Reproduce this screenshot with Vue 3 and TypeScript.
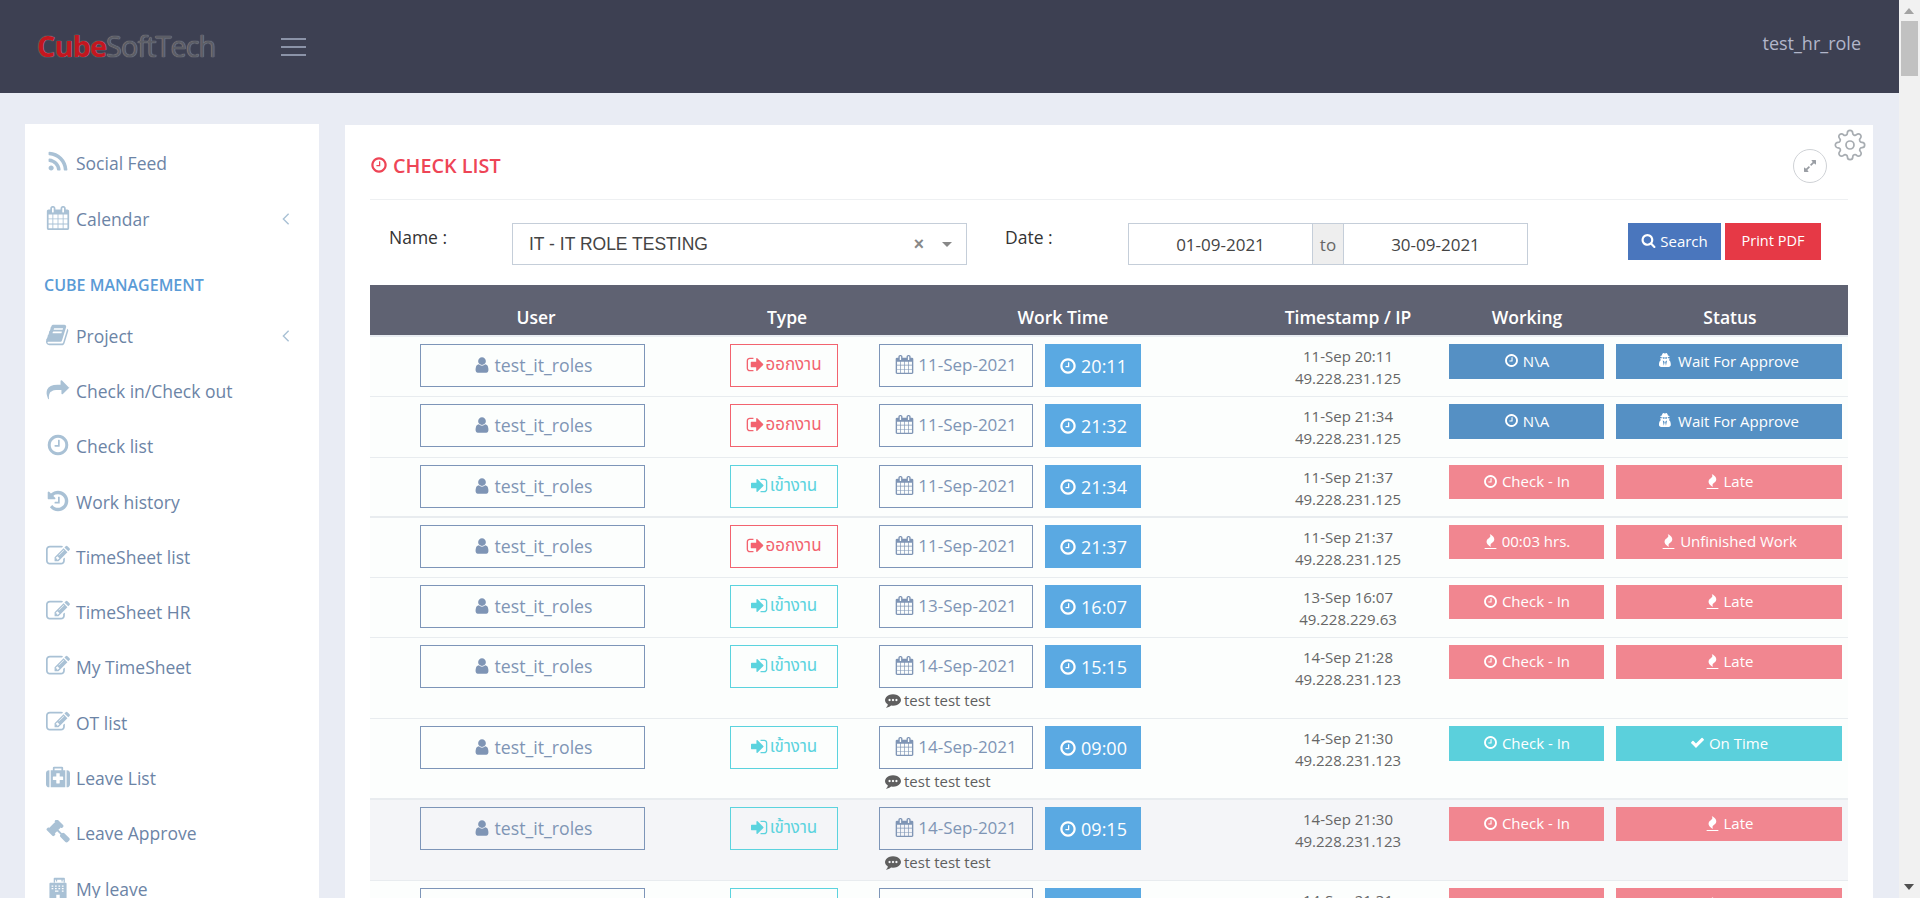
<template>
  <div class="page">
    <div class="viewport">
      <header class="topbar">
        <div class="logo"><span class="logo-cube">Cube</span><span class="logo-soft">SoftTech</span></div>
        <button class="burger" type="button" aria-label="menu"><i></i><i></i><i></i></button>
        <div class="username">test_hr_role</div>
      </header>

      <div class="body">
        <aside class="sidebar">
          <template v-for="item in menu" :key="item.label">
            <div v-if="item.section" class="menu-section">{{ item.label }}</div>
            <div v-else class="menu-item">
              <svg class="menu-icon" viewBox="0 0 1792 1792"><path :d="icons[item.icon!]" /></svg>
              <span class="menu-label">{{ item.label }}</span>
              <svg v-if="item.arrow" class="menu-arrow" viewBox="0 0 10 16"><path d="M8 2 2 8l6 6" /></svg>
            </div>
          </template>
        </aside>

        <main class="card">
          <svg class="gear" viewBox="0 0 24 24">
            <circle cx="12" cy="12" r="3" />
            <path d="M19.4 15a1.65 1.65 0 0 0 .33 1.82l.06.06a2 2 0 0 1 0 2.83 2 2 0 0 1-2.83 0l-.06-.06a1.65 1.65 0 0 0-1.82-.33 1.65 1.65 0 0 0-1 1.51V21a2 2 0 0 1-2 2 2 2 0 0 1-2-2v-.09A1.65 1.65 0 0 0 9 19.4a1.65 1.65 0 0 0-1.82.33l-.06.06a2 2 0 0 1-2.83 0 2 2 0 0 1 0-2.83l.06-.06a1.65 1.65 0 0 0 .33-1.82 1.65 1.65 0 0 0-1.51-1H3a2 2 0 0 1-2-2 2 2 0 0 1 2-2h.09A1.65 1.65 0 0 0 4.6 9a1.65 1.65 0 0 0-.33-1.82l-.06-.06a2 2 0 0 1 0-2.83 2 2 0 0 1 2.83 0l.06.06a1.65 1.65 0 0 0 1.82.33H9a1.65 1.65 0 0 0 1-1.51V3a2 2 0 0 1 2-2 2 2 0 0 1 2 2v.09a1.65 1.65 0 0 0 1 1.51 1.65 1.65 0 0 0 1.82-.33l.06-.06a2 2 0 0 1 2.83 0 2 2 0 0 1 0 2.83l-.06.06a1.65 1.65 0 0 0-.33 1.82V9a1.65 1.65 0 0 0 1.51 1H21a2 2 0 0 1 2 2 2 2 0 0 1-2 2h-.09a1.65 1.65 0 0 0-1.51 1z" />
          </svg>

          <div class="card-head">
            <h1 class="title">
              <svg class="ico" viewBox="0 0 1792 1792"><path :d="icons.clock" /></svg>
              CHECK LIST
            </h1>
            <button class="expand" type="button" aria-label="expand">
              <svg viewBox="0 0 1792 1792"><path :d="icons.expand" /></svg>
            </button>
          </div>

          <div class="filters">
            <label class="filter-label name-label">Name :</label>
            <div class="select">
              <span class="select-text">IT - IT ROLE TESTING</span>
              <span class="select-clear">×</span>
              <span class="select-caret"></span>
            </div>
            <label class="filter-label date-label">Date :</label>
            <div class="range">
              <span class="range-input">01-09-2021</span>
              <span class="range-to">to</span>
              <span class="range-input">30-09-2021</span>
            </div>
            <button class="btn btn-search" type="button">
              <svg class="ico" viewBox="0 0 1792 1792"><path :d="icons.search" /></svg>
              Search
            </button>
            <button class="btn btn-print" type="button">Print PDF</button>
          </div>

          <div class="thead grid">
            <div>User</div>
            <div>Type</div>
            <div>Work Time</div>
            <div>Timestamp / IP</div>
            <div>Working</div>
            <div>Status</div>
          </div>

          <div
            v-for="(row, i) in rows"
            :key="i"
            class="row grid"
            :class="{ hovered: row.hovered, thick: row.thick, tall: row.tall }"
          >
            <div class="cell-user">
              <div class="box box-user">
                <svg class="ico" viewBox="0 0 1792 1792"><path :d="icons.user" /></svg>
                test_it_roles
              </div>
            </div>
            <div class="cell-type">
              <div class="box box-type" :class="row.type === 'out' ? 'type-out' : 'type-in'">
                <svg class="ico" viewBox="0 0 1792 1792"><path :d="row.type === 'out' ? icons.signOut : icons.signIn" /></svg>
                <span>{{ row.type === 'out' ? 'ออกงาน' : 'เข้างาน' }}</span>
              </div>
            </div>
            <div class="cell-work">
              <div class="work-line">
                <div class="box box-date">
                  <svg class="ico" viewBox="0 0 1792 1792"><path :d="icons.calendar" /></svg>
                  {{ row.date }}
                </div>
                <div class="box-time">
                  <svg class="ico" viewBox="0 0 1792 1792"><path :d="icons.clock" /></svg>
                  {{ row.time }}
                </div>
              </div>
              <div v-if="row.note" class="note">
                <svg class="ico" viewBox="0 0 1792 1792"><path :d="icons.comment" /></svg>
                {{ row.note }}
              </div>
            </div>
            <div class="cell-stamp">
              <div>{{ row.stamp }}</div>
              <div>{{ row.ip }}</div>
            </div>
            <div class="cell-working">
              <div class="badge" :class="row.tone">
                <svg class="ico" viewBox="0 0 1792 1792"><path :d="icons[row.workIcon]" /></svg>
                {{ row.working }}
              </div>
            </div>
            <div class="cell-status">
              <div class="badge" :class="row.tone">
                <svg class="ico" viewBox="0 0 1792 1792"><path :d="icons[row.statusIcon]" /></svg>
                {{ row.status }}
              </div>
            </div>
          </div>
        </main>
      </div>
    </div>

    <div class="scrollbar">
      <span class="scroll-up"></span>
      <span class="scroll-thumb"></span>
      <span class="scroll-down"></span>
    </div>
  </div>
</template>

<script setup lang="ts">
const icons: Record<string, string> = {
  rss: 'M576 1344q0 80-56 136t-136 56-136-56-56-136 56-136 136-56 136 56 56 136zm512 123q2 28-17 48-18 21-47 21h-135q-25 0-43-16.5t-20-41.5q-22-229-184.5-391.5t-391.5-184.5q-25-2-41.5-20t-16.5-43v-135q0-29 21-47 17-17 43-17h5q160 13 306 80.5t259 181.5q114 113 181.5 259t80.5 306zm512 2q2 27-18 47-18 20-46 20h-143q-26 0-44.5-17.5t-19.5-42.5q-12-215-101-408.5t-231.5-336-336-231.5-408.5-102q-25-1-42.5-19.5t-17.5-43.5v-143q0-28 20-46 18-18 44-18h3q262 13 501.5 120t425.5 294q187 186 294 425.5t120 501.5z',
  calendar: 'M192 1664h288v-288h-288v288zm352 0h320v-288h-320v288zm-352-352h288v-320h-288v320zm352 0h320v-320h-320v320zm-352-384h288v-288h-288v288zm736 736h320v-288h-320v288zm-384-736h320v-288h-320v288zm768 736h288v-288h-288v288zm-384-352h320v-320h-320v320zm-352-864v-288q0-13-9.5-22.5t-22.5-9.5h-64q-13 0-22.5 9.5t-9.5 22.5v288q0 13 9.5 22.5t22.5 9.5h64q13 0 22.5-9.5t9.5-22.5zm736 864h288v-320h-288v320zm-384-384h320v-288h-320v288zm384 0h288v-288h-288v288zm32-480v-288q0-13-9.5-22.5t-22.5-9.5h-64q-13 0-22.5 9.5t-9.5 22.5v288q0 13 9.5 22.5t22.5 9.5h64q13 0 22.5-9.5t9.5-22.5zm384-64v1280q0 52-38 90t-90 38h-1408q-52 0-90-38t-38-90v-1280q0-52 38-90t90-38h128v-96q0-66 47-113t113-47h64q66 0 113 47t47 113v96h384v-96q0-66 47-113t113-47h64q66 0 113 47t47 113v96h128q52 0 90 38t38 90z',
  book: 'M1639 478q40 57 18 129l-275 906q-19 64-76.5 107.5t-122.5 43.5h-923q-77 0-148.5-53.5t-99.5-131.5q-24-67-2-127 0-4 3-27t4-37q1-8-3-21.5t-3-19.5q2-11 8-21t16.5-23.5 16.5-23.5q23-38 45-91.5t30-91.5q3-10 .5-30t-.5-28q3-11 17-28t17-23q21-36 42-92t25-90q1-9-2.5-32t.5-28q4-13 22-30.5t22-22.5q19-26 42.5-84.5t27.5-96.5q1-8-3-25.5t-2-26.5q2-8 9-18t18-23 17-21q8-12 16.5-30.5t15-35 16-36 19.5-32 26.5-23.5 36-11.5 47.5 5.5l-1 3q38-9 51-9h761q74 0 114 56t18 130l-274 906q-36 119-71.5 153.5t-128.5 34.5h-869q-27 0-38 15-11 16-1 43 24 70 144 70h923q29 0 56-15.5t35-41.5l300-987q7-22 5-57 38 15 59 43zm-1064 2q-4 13 2 22.5t20 9.5h608q13 0 25.5-9.5t16.5-22.5l21-64q4-13-2-22.5t-20-9.5h-608q-13 0-25.5 9.5t-16.5 22.5zm-83 256q-4 13 2 22.5t20 9.5h608q13 0 25.5-9.5t16.5-22.5l21-64q4-13-2-22.5t-20-9.5h-608q-13 0-25.5 9.5t-16.5 22.5z',
  share: 'M1792 640q0 26-19 45l-512 512q-19 19-45 19t-45-19-19-45v-256h-224q-98 0-175.5 6t-154 21.5-133 42.5-105.5 69.5-79 97-47 132.5-17 169q0 32 3 88 0 3 1 11.5t1 12.5q0 14-8 23t-22 9q-15 0-26-16-6-8-10-17t-10-21-8-16q-95-213-95-361 0-177 47-296 143-356 773-356h224v-256q0-26 19-45t45-19 45 19l512 512q19 19 19 45z',
  clock: 'M1024 544v448q0 14-9 23t-23 9h-320q-14 0-23-9t-9-23v-64q0-14 9-23t23-9h224v-352q0-14 9-23t23-9h64q14 0 23 9t9 23zm416 352q0-148-73-273t-198-198-273-73-273 73-198 198-73 273 73 273 198 198 273 73 273-73 198-198 73-273zm224 0q0 209-103 385.5t-279.5 279.5-385.5 103-385.5-103-279.5-279.5-103-385.5 103-385.5 279.5-279.5 385.5-103 385.5 103 279.5 279.5 103 385.5z',
  history: 'M1664 896q0 156-61 298t-164 245-245 164-298 61q-172 0-327-72.5t-264-204.5q-7-10-6.5-22.5t8.5-20.5l137-138q10-9 25-9 16 2 23 12 73 95 179 147t225 52q104 0 198.5-40.5t163.5-109.5 109.5-163.5 40.5-198.5-40.5-198.5-109.5-163.5-163.5-109.5-198.5-40.5q-98 0-188 35.5t-160 101.5l137 138q31 30 14 69-17 40-59 40h-448q-26 0-45-19t-19-45v-448q0-42 40-59 39-17 69 14l130 129q107-101 244.5-156.5t284.5-55.5q156 0 298 61t245 164 164 245 61 298zm-640-288v448q0 14-9 23t-23 9h-320q-14 0-23-9t-9-23v-64q0-14 9-23t23-9h224v-352q0-14 9-23t23-9h64q14 0 23 9t9 23z',
  edit: 'M888 1184l116-116-152-152-116 116v56h96v96h56zm440-720q-16-16-33 1l-350 350q-17 17-1 33t33-1l350-350q17-17 1-33zm80 594v190q0 119-84.5 203.5t-203.5 84.5h-832q-119 0-203.5-84.5t-84.5-203.5v-832q0-119 84.5-203.5t203.5-84.5h832q63 0 117 25 15 7 18 23 3 17-9 29l-49 49q-14 14-32 8-23-6-45-6h-832q-66 0-113 47t-47 113v832q0 66 47 113t113 47h832q66 0 113-47t47-113v-126q0-13 9-22l64-64q15-15 35-7t20 29zm-96-738l288 288-672 672h-288v-288zm444 132l-92 92-288-288 92-92q28-28 68-28t68 28l152 152q28 28 28 68t-28 68z',
  medkit: 'M1280 1088v-192q0-14-9-23t-23-9h-224v-224q0-14-9-23t-23-9h-192q-14 0-23 9t-9 23v224h-224q-14 0-23 9t-9 23v192q0 14 9 23t23 9h224v224q0 14 9 23t23 9h192q14 0 23-9t9-23v-224h224q14 0 23-9t9-23zm-640-704h512v-128h-512v128zm-384 0v1280h-32q-92 0-158-66t-66-158v-832q0-92 66-158t158-66h32zm1184 0v1280h-1088v-1280h160v-160q0-40 28-68t68-28h576q40 0 68 28t28 68v160h160zm352 224v832q0 92-66 158t-158 66h-32v-1280h32q92 0 158 66t66 158z',
  gavel: 'M1771 1440q0 53-37 90l-107 108q-39 37-91 37-53 0-90-37l-363-364q-38-36-38-90 0-53 43-96l-256-256-126 126q-14 14-34 14t-34-14q2 2 12.5 12t12.5 13 10 11.5 10 13.5 6 13.5 5.5 16.5 1.5 18q0 38-28 68-3 3-16.5 18t-19 20.5-18.5 16.5-22 15.5-22 9-26 4.5q-40 0-68-28l-408-408q-28-28-28-68 0-13 4.5-26t9-22 15.5-22 16.5-18.5 20.5-19 18-16.5q30-28 68-28 10 0 18 1.5t16.5 5.5 13.5 6 13.5 10 11.5 10 13 12.5 12 12.5q-14-14-14-34t14-34l348-348q14-14 34-14t34 14q-2-2-12.5-12t-12.5-13-10-11.5-10-13.5-6-13.5-5.5-16.5-1.5-18q0-38 28-68 3-3 16.5-18t19-20.5 18.5-16.5 22-15.5 22-9 26-4.5q40 0 68 28l408 408q28 28 28 68 0 13-4.5 26t-9 22-15.5 22-16.5 18.5-20.5 19-18 16.5q-30 28-68 28-10 0-18-1.5t-16.5-5.5-13.5-6-13.5-10-11.5-10-13-12.5-12-12.5q14 14 14 34t-14 34l-126 126 256 256q43-43 96-43 52 0 91 37l363 363q37 39 37 91z',
  hospital: 'M448 128h896a64 64 0 0 1 64 64v288h-96v-192h-64v128h-96v-128h-320v128h-96v-128h-64v192h-96v-288a64 64 0 0 1 64-64zM320 512h1152a64 64 0 0 1 64 64v1088h-512v-256h-256v256h-512v-1088a64 64 0 0 1 64-64zm96 192v96h128v-96zm256 0v96h128v-96zm256 0v96h128v-96zm256 0v96h128v-96zm-768 192v96h128v-96zm256 0v96h128v-96zm256 0v96h128v-96zm256 0v96h128v-96zm-768 192v96h128v-96zm768 0v96h128v-96zm-512 0v96h256v-96zm-256 0v96h128v-96z',
  user: 'M1536 1399q0 109-62.5 187t-150.5 78h-854q-88 0-150.5-78t-62.5-187q0-85 8.5-160.5t31.5-152 58.5-131 94-89 134.5-34.5q131 128 313 128t313-128q76 0 134.5 34.5t94 89 58.5 131 31.5 152 8.5 160.5zm-256-887q0 159-112.5 271.5t-271.5 112.5-271.5-112.5-112.5-271.5 112.5-271.5 271.5-112.5 271.5 112.5 112.5 271.5z',
  signOut: 'M704 1440q0 4 1 20t.5 26.5-3 23.5-10 19.5-20.5 6.5h-320q-119 0-203.5-84.5t-84.5-203.5v-704q0-119 84.5-203.5t203.5-84.5h320q13 0 22.5 9.5t9.5 22.5q0 4 1 20t.5 26.5-3 23.5-10 19.5-20.5 6.5h-320q-66 0-113 47t-47 113v704q0 66 47 113t113 47h312l11.5 1 11.5 3 8 5.5 7 9 2 13.5zm928-544q0 26-19 45l-544 544q-19 19-45 19t-45-19-19-45v-288h-448q-26 0-45-19t-19-45v-384q0-26 19-45t45-19h448v-288q0-26 19-45t45-19 45 19l544 544q19 19 19 45z',
  signIn: 'M1184 896q0 26-19 45l-544 544q-19 19-45 19t-45-19-19-45v-288h-448q-26 0-45-19t-19-45v-384q0-26 19-45t45-19h448v-288q0-26 19-45t45-19 45 19l544 544q19 19 19 45zm352-352v704q0 119-84.5 203.5t-203.5 84.5h-320q-13 0-22.5-9.5t-9.5-22.5q0-4-1-20t-.5-26.5 3-23.5 10-19.5 20.5-6.5h320q66 0 113-47t47-113v-704q0-66-47-113t-113-47h-312l-11.5-1-11.5-3-8-5.5-7-9-2-13.5q0-4-1-20t-.5-26.5 3-23.5 10-19.5 20.5-6.5h320q119 0 203.5 84.5t84.5 203.5z',
  fire: 'M1600 1696v64q0 13-9.5 22.5t-22.5 9.5h-1344q-13 0-22.5-9.5t-9.5-22.5v-64q0-13 9.5-22.5t22.5-9.5h1344q13 0 22.5 9.5t9.5 22.5zm-256-1056q0 78-24.5 144t-64 112.5-87.5 88-96 77.5-87.5 72-64 81.5-24.5 96.5q0 96 67 224l-4-1 1 1q-90-41-160-83t-141.5-100.5-119.5-120-80.5-144.5-30.5-173q0-78 24.5-144t64-112.5 87.5-88 96-77.5 87.5-72 64-81.5 24.5-96.5q0-94-66-224l3 1-1-1q90 41 160 83t141.5 100.5 119.5 120 80.5 144.5 30.5 173z',
  secret: 'M576 1536l96-448-96-128-128-64zm256 0l128-640-128 64-96 128zm160-1010q-2-4-4-6-10-8-96-8-70 0-167 19-7 2-21 2t-21-2q-97-19-167-19-86 0-96 8-2 2-4 6 2 18 4 27 2 3 7.5 6.5t7.5 10.5q2 4 7.5 20.5t7 20.5 7.5 17 8.5 17 9 14 12 13.5 14 9.5 17.5 8 20.5 4 24.5 2q36 0 59-12.5t32.5-30 14.5-34.5 11.5-29.5 17.5-12.5h12q11 0 17.5 12.5t11.5 29.5 14.5 34.5 32.5 30 59 12.5q13 0 24.5-2t20.5-4 17.5-8 14-9.5 12-13.5 9-14 8.5-17 7.5-17 7-20.5 7.5-20.5q2-7 7.5-10.5t7.5-6.5q2-9 4-27zm416 879q0 121-73 190t-194 69h-874q-121 0-194-69t-73-190q0-61 4.5-118t19-125.5 37.5-123.5 63.5-103.5 93.5-74.5l-90-220h214q-22-64-22-128 0-12 2-32-194-40-194-96 0-57 210-99 17-62 51.5-134t70.5-114q32-37 76-37 30 0 84 31t84 31 84-31 84-31q44 0 76 36 36 42 70.5 114.5t51.5 134.5q210 42 210 99 0 56-194 96 7 81-20 160h214l-82 225q63 33 107.5 96.5t65.5 143.5 29 151.5 8 148.5z',
  comment: 'M640 896q0-53-37.5-90.5t-90.5-37.5-90.5 37.5-37.5 90.5 37.5 90.5 90.5 37.5 90.5-37.5 37.5-90.5zm384 0q0-53-37.5-90.5t-90.5-37.5-90.5 37.5-37.5 90.5 37.5 90.5 90.5 37.5 90.5-37.5 37.5-90.5zm384 0q0-53-37.5-90.5t-90.5-37.5-90.5 37.5-37.5 90.5 37.5 90.5 90.5 37.5 90.5-37.5 37.5-90.5zm384 0q0 174-120 321.5t-326 233-450 85.5q-110 0-211-18-173 173-435 229-52 10-86 13-12 1-22-6t-13-18q-4-15 20-37 5-5 23.5-21.5t25.5-23.5 23.5-25.5 24-31.5 20.5-37 20-48 14.5-57.5 12.5-72.5q-146-90-229.5-216.5t-83.5-269.5q0-174 120-321.5t326-233 450-85.5 450 85.5 326 233 120 321.5z',
  check: 'M1671 566q0 40-28 68l-724 724-136 136q-28 28-68 28t-68-28l-136-136-362-362q-28-28-28-68t28-68l136-136q28-28 68-28t68 28l294 295 656-657q28-28 68-28t68 28l136 136q28 28 28 68z',
  search: 'M1216 832q0-185-131.5-316.5t-316.5-131.5-316.5 131.5-131.5 316.5 131.5 316.5 316.5 131.5 316.5-131.5 131.5-316.5zm512 832q0 52-38 90t-90 38q-54 0-90-38l-343-342q-179 124-399 124-143 0-273.5-55.5t-225-150-150-225-55.5-273.5 55.5-273.5 150-225 225-150 273.5-55.5 273.5 55.5 225 150 150 225 55.5 273.5q0 220-124 399l343 343q37 37 37 90z',
  expand: 'M883 1056q0 13-10 23l-332 332 144 144q19 19 19 45t-19 45-45 19h-448q-26 0-45-19t-19-45v-448q0-26 19-45t45-19 45 19l144 144 332-332q10-10 23-10t23 10l114 114q10 10 10 23zm781-864v448q0 26-19 45t-45 19-45-19l-144-144-332 332q-10 10-23 10t-23-10l-114-114q-10-10-10-23t10-23l332-332-144-144q-19-19-19-45t19-45 45-19h448q26 0 45 19t19 45z',
}

interface MenuEntry {
  label: string
  icon?: string
  arrow?: boolean
  section?: boolean
}

const menu: MenuEntry[] = [
  { label: 'Social Feed', icon: 'rss' },
  { label: 'Calendar', icon: 'calendar', arrow: true },
  { label: 'CUBE MANAGEMENT', section: true },
  { label: 'Project', icon: 'book', arrow: true },
  { label: 'Check in/Check out', icon: 'share' },
  { label: 'Check list', icon: 'clock' },
  { label: 'Work history', icon: 'history' },
  { label: 'TimeSheet list', icon: 'edit' },
  { label: 'TimeSheet HR', icon: 'edit' },
  { label: 'My TimeSheet', icon: 'edit' },
  { label: 'OT list', icon: 'edit' },
  { label: 'Leave List', icon: 'medkit' },
  { label: 'Leave Approve', icon: 'gavel' },
  { label: 'My leave', icon: 'hospital' },
]

interface Row {
  type: 'in' | 'out'
  date: string
  time: string
  stamp: string
  ip: string
  working: string
  workIcon: string
  status: string
  statusIcon: string
  tone: 'blue' | 'pink' | 'teal'
  note?: string
  hovered?: boolean
  thick?: boolean
  tall?: boolean
}

const rows: Row[] = [
  { type: 'out', date: '11-Sep-2021', time: '20:11', stamp: '11-Sep 20:11', ip: '49.228.231.125', working: 'N\\A', workIcon: 'clock', status: 'Wait For Approve', statusIcon: 'secret', tone: 'blue' },
  { type: 'out', date: '11-Sep-2021', time: '21:32', stamp: '11-Sep 21:34', ip: '49.228.231.125', working: 'N\\A', workIcon: 'clock', status: 'Wait For Approve', statusIcon: 'secret', tone: 'blue', tall: true },
  { type: 'in', date: '11-Sep-2021', time: '21:34', stamp: '11-Sep 21:37', ip: '49.228.231.125', working: 'Check - In', workIcon: 'clock', status: 'Late', statusIcon: 'fire', tone: 'pink', thick: true },
  { type: 'out', date: '11-Sep-2021', time: '21:37', stamp: '11-Sep 21:37', ip: '49.228.231.125', working: '00:03 hrs.', workIcon: 'fire', status: 'Unfinished Work', statusIcon: 'fire', tone: 'pink' },
  { type: 'in', date: '13-Sep-2021', time: '16:07', stamp: '13-Sep 16:07', ip: '49.228.229.63', working: 'Check - In', workIcon: 'clock', status: 'Late', statusIcon: 'fire', tone: 'pink' },
  { type: 'in', date: '14-Sep-2021', time: '15:15', stamp: '14-Sep 21:28', ip: '49.228.231.123', working: 'Check - In', workIcon: 'clock', status: 'Late', statusIcon: 'fire', tone: 'pink', note: 'test test test' },
  { type: 'in', date: '14-Sep-2021', time: '09:00', stamp: '14-Sep 21:30', ip: '49.228.231.123', working: 'Check - In', workIcon: 'clock', status: 'On Time', statusIcon: 'check', tone: 'teal', note: 'test test test', thick: true },
  { type: 'in', date: '14-Sep-2021', time: '09:15', stamp: '14-Sep 21:30', ip: '49.228.231.123', working: 'Check - In', workIcon: 'clock', status: 'Late', statusIcon: 'fire', tone: 'pink', note: 'test test test', hovered: true },
  { type: 'in', date: '14-Sep-2021', time: '10:00', stamp: '14-Sep 21:31', ip: '49.228.231.123', working: 'Check - In', workIcon: 'clock', status: 'Late', statusIcon: 'fire', tone: 'pink' },
]
</script>

<style>
html,
body {
  margin: 0;
  height: 100%;
  overflow: hidden;
}
</style>

<style scoped>
.page {
  display: flex;
  height: 898px;
  overflow: hidden;
  font-family: "Open Sans", "Noto Sans", sans-serif;
  background: #e9ecf4;
}

.viewport {
  flex: 1;
  min-width: 0;
}

.ico {
  fill: currentColor;
  flex: none;
}

/* top bar */
.topbar {
  height: 93px;
  display: flex;
  align-items: center;
  background: #3d4052;
  padding: 0 38px;
}

.logo {
  width: 243px;
  font-size: 29px;
  letter-spacing: -1px;
  line-height: 1;
  margin-top: -2px;
  margin-left: -1px;
  padding-right: 1px;
}

.logo-cube {
  color: #c4161f;
  font-weight: 700;
  text-shadow: 0 0 1px #8a8a8e, 0 0 1px #8a8a8e;
}

.logo-soft {
  color: #5c5e66;
  text-shadow: 0 0 1px #8c8e96, 0 0 1px #8c8e96;
}

.burger {
  width: 25px;
  display: flex;
  flex-direction: column;
  gap: 6px;
  padding: 0;
  border: 0;
  background: none;
}

.burger i {
  display: block;
  height: 2px;
  background: #8b93a8;
}

.username {
  margin-left: auto;
  font-size: 18px;
  color: #b2b6ca;
  margin-top: -7px;
}

/* layout */
.body {
  display: flex;
  align-items: flex-start;
  gap: 26px;
  padding: 31px 26px 0 25px;
}

.sidebar {
  width: 294px;
  flex: none;
  background: #fff;
  padding-top: 11px;
}

.menu-item {
  height: 55.3px;
  display: flex;
  align-items: center;
  padding: 0 28px 0 21px;
  color: #6c84a6;
  font-size: 17.5px;
}

.menu-icon {
  width: 24px;
  height: 24px;
  margin-right: 6px;
  fill: #a9c1d5;
  flex: none;
  margin-top: -2px;
}

.menu-label {
  flex: 1;
}

.menu-arrow {
  width: 10px;
  height: 14px;
  fill: none;
  stroke: #a9c1d5;
  stroke-width: 1.6;
}

.menu-section {
  height: 61px;
  padding: 27px 0 0 19px;
  box-sizing: border-box;
  font-size: 16px;
  font-weight: 600;
  color: #5a9bd6;
}

.menu-item:nth-child(-n + 2) {
  height: 56px;
}

/* card */
.card {
  flex: 1;
  min-width: 0;
  position: relative;
  margin-top: 1px;
  padding: 0 25px;
  background: #fff;
}

.gear {
  position: absolute;
  top: 4px;
  right: 7px;
  width: 32px;
  height: 32px;
  fill: none;
  stroke: #a8adb2;
  stroke-width: 1.3;
}

.card-head {
  height: 75px;
  display: flex;
  align-items: center;
  justify-content: space-between;
  padding: 6px 21px 0 0;
  box-sizing: border-box;
  border-bottom: 1px solid #eef0f2;
}

.title {
  margin: 0;
  display: flex;
  align-items: center;
  gap: 5px;
  font-size: 19.8px;
  font-weight: 600;
  color: #ee4556;
}

.title .ico {
  width: 18px;
  height: 18px;
}

.expand {
  width: 34px;
  height: 34px;
  padding: 0;
  display: flex;
  align-items: center;
  justify-content: center;
  border: 1px solid #cfd2d6;
  border-radius: 50%;
  background: #fff;
  margin-top: 2px;
}

.expand svg {
  width: 14px;
  height: 14px;
  fill: #9a9ea4;
}

/* filters */
.filters {
  height: 85px;
  display: flex;
  align-items: flex-start;
  padding-top: 23px;
  box-sizing: border-box;
  font-size: 17.5px;
}

.filter-label {
  color: #333;
  line-height: 28px;
}

.name-label {
  width: 123px;
  padding-left: 19px;
  box-sizing: content-box;
  flex: none;
}

.select {
  width: 455px;
  height: 42px;
  box-sizing: border-box;
  flex: none;
  display: flex;
  align-items: center;
  padding: 0 14px 0 16px;
  border: 1px solid #c5ced9;
  font-family: "Liberation Sans", Arial, sans-serif;
  color: #444;
}

.select-text {
  flex: 1;
}

.select-clear {
  color: #888;
  font-weight: 700;
  margin-right: 18px;
}

.select-caret {
  width: 0;
  height: 0;
  border-left: 5px solid transparent;
  border-right: 5px solid transparent;
  border-top: 5px solid #888;
}

.date-label {
  width: 123px;
  padding-left: 38px;
  flex: none;
}

.range {
  width: 400px;
  height: 42px;
  box-sizing: border-box;
  flex: none;
  display: flex;
  border: 1px solid #c5ced9;
  color: #444;
  font-size: 17px;
}

.range-input {
  flex: 1;
  display: flex;
  align-items: center;
  justify-content: center;
}

.range-to {
  width: 30px;
  display: flex;
  align-items: center;
  justify-content: center;
  background: #eee;
  border-left: 1px solid #c5ced9;
  border-right: 1px solid #c5ced9;
  color: #666;
  flex: none;
}

.btn {
  height: 37px;
  display: flex;
  align-items: center;
  justify-content: center;
  gap: 4px;
  padding: 0 0 2px;
  border: 0;
  color: #fff;
  font: 15px "Open Sans", sans-serif;
}

.btn .ico {
  width: 15px;
  height: 15px;
}

.btn-search {
  width: 93px;
  margin-left: 100px;
  background: #4a76bd;
}

.btn-print {
  width: 96px;
  margin-left: 4px;
  background: #e63946;
  font-size: 14.5px;
}

/* table */
.grid {
  display: grid;
  grid-template-columns: 332px 170px 382px 188px 170px 236px;
}

.thead {
  height: 50px;
  align-items: end;
  padding-bottom: 6px;
  box-sizing: border-box;
  background: #5f6272;
  color: #fff;
  font-size: 17.5px;
  font-weight: 600;
  text-align: center;
  box-shadow: 0 2px 0 #e9edf2;
}

.row {
  padding: 7px 0 9px;
  background: #fcfefd;
  border-bottom: 1px solid #e8ecef;
  box-sizing: border-box;
}

.thead + .row {
  margin-top: 2px;
}

.row.tall {
  padding-bottom: 10px;
}

.row.thick {
  border-bottom-width: 2px;
  padding-bottom: 8px;
}

.row.hovered {
  background: #f4f5f8;
}

.box {
  height: 43px;
  padding-bottom: 2px;
  box-sizing: border-box;
  display: flex;
  align-items: center;
  justify-content: center;
  gap: 4px;
  border: 1px solid #7d95b8;
}

.cell-user {
  padding-left: 50px;
}

.box-user {
  width: 225px;
  color: #7f95b5;
  font-size: 17.7px;
}

.box-user .ico {
  width: 18px;
  height: 18px;
}

.cell-type {
  padding-left: 28px;
}

.box-type {
  width: 108px;
  gap: 0;
  font-size: 17px;
  font-family: "Open Sans", "Noto Sans Thai", "Noto Sans", "DejaVu Sans", sans-serif;
}

.box-type .ico {
  width: 19px;
  height: 19px;
}

.type-out {
  border-color: #f2636f;
  color: #f2636f;
}

.type-in {
  border-color: #5bd3de;
  color: #5bd3de;
}

.cell-work {
  padding-left: 7px;
}

.work-line {
  display: flex;
  gap: 12px;
}

.box-date {
  width: 154px;
  color: #7f95b5;
  font-size: 17px;
  gap: 4px;
}

.box-date .ico {
  width: 19px;
  height: 19px;
}

.box-time {
  width: 96px;
  height: 43px;
  display: flex;
  align-items: center;
  justify-content: center;
  gap: 4px;
  background: #5aa9e2;
  color: #fff;
  font-size: 18px;
}

.box-time .ico {
  width: 18px;
  height: 18px;
}

.note {
  display: flex;
  align-items: center;
  gap: 3px;
  height: 21px;
  padding: 2px 0 0 6px;
  box-sizing: border-box;
  color: #5f5f5f;
  font-size: 15px;
}

.note .ico {
  width: 16px;
  height: 16px;
}

.cell-stamp {
  margin: 1px 0 -2px;
  text-align: center;
  color: #666;
  font-size: 15px;
  line-height: 22px;
}

.cell-working {
  padding-left: 7px;
}

.cell-status {
  padding-left: 4px;
}

.badge {
  height: 35px;
  padding-bottom: 2px;
  box-sizing: border-box;
  display: flex;
  align-items: center;
  justify-content: center;
  gap: 4px;
  color: #fff;
  font-size: 15px;
}

.badge .ico {
  width: 15px;
  height: 15px;
}

.cell-working .badge {
  width: 155px;
}

.cell-status .badge {
  width: 226px;
}

.blue {
  background: #5590c4;
}

.pink {
  background: #f18690;
  height: 34px;
}

.teal {
  background: #5bd0dc;
}

/* scrollbar */
.scrollbar {
  width: 21px;
  flex: none;
  background: #f1f1f1;
  position: relative;
}

.scroll-up,
.scroll-down {
  position: absolute;
  left: 5px;
  width: 0;
  height: 0;
  border-left: 5px solid transparent;
  border-right: 5px solid transparent;
}

.scroll-up {
  top: 8px;
  border-bottom: 6px solid #a3a3a3;
}

.scroll-down {
  bottom: 8px;
  border-top: 6px solid #505050;
}

.scroll-thumb {
  position: absolute;
  top: 21px;
  left: 2px;
  width: 17px;
  height: 55px;
  background: #c1c1c1;
}
</style>
